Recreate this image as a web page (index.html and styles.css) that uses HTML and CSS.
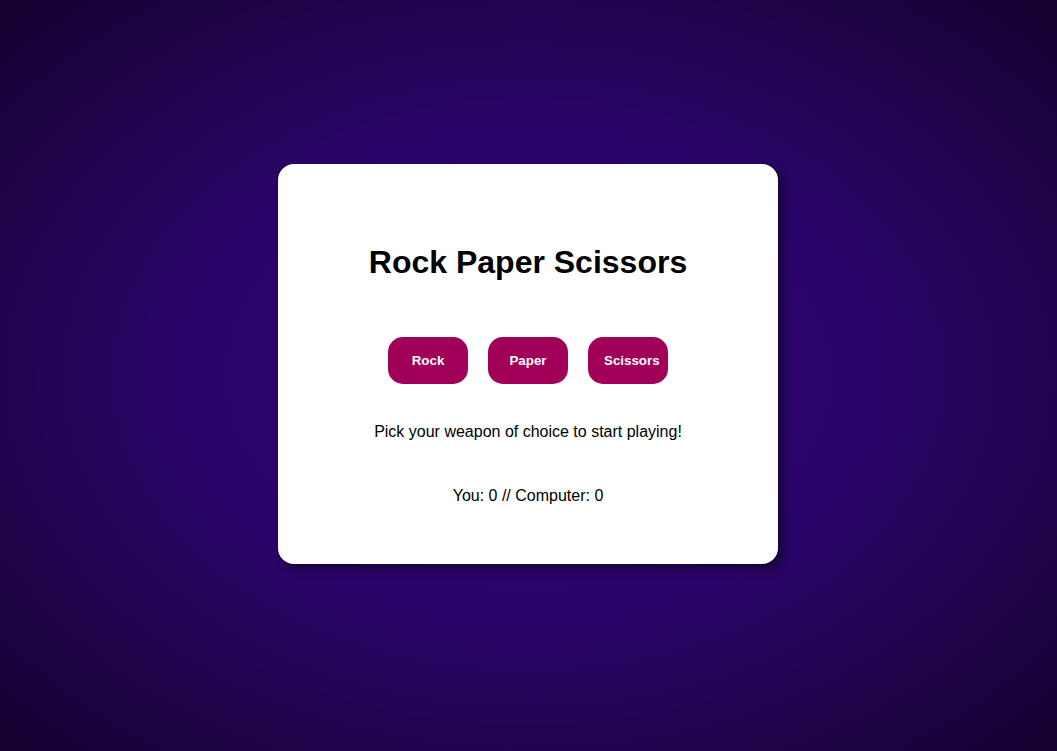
FILE: index.html
```html
<!DOCTYPE html>
<html lang="en">
<head>
    <meta charset="UTF-8">
    <meta name="viewport" content="width=device-width, initial-scale=1.0">
    <title>Rock Paper Scissors</title>
    <link rel="stylesheet" href="styles.css">
</head>
<body>
    <div class="container">
        <h1>Rock Paper Scissors</h1>

        <!-- Weapon buttons -->
        <div class="buttons">
            <button class="weapon-btn" id="rock">Rock</button>
            <button class="weapon-btn" id="paper">Paper</button>
            <button class="weapon-btn" id="scissors">Scissors</button>
        </div>

        <p class="result">Pick your weapon of choice to start playing!</p>
        <p class="score">You: 0 // Computer: 0</p>
    </div>
</body>
</html>
```

FILE: styles.css
```css
html {
    height: 100%;
}
body {
    font-family: "Liberation Sans", Arial, sans-serif;
    margin: 0;
    min-height: 100vh;
    box-sizing: border-box;
    padding: 0 1px 23px 0;
    display: flex;
    justify-content: center;
    align-items: center;
    background: radial-gradient(ellipse at center, #300474 0%, #2b046a 45%, #14022f 100%);
}
.container {
    width: 500px;
    height: 400px;
    box-sizing: border-box;
    padding-top: 80px;
    background: #fff;
    border-radius: 16px;
    box-shadow: 5px 5px 10px rgba(0, 0, 0, 0.45);
    display: flex;
    flex-direction: column;
    align-items: center;
    text-align: center;
}
h1 {
    font-size: 32px;
    margin: 0 0 56px;
}
.buttons {
    display: flex;
    gap: 20px;
    margin-bottom: 39px;
}
.weapon-btn {
    width: 80px;
    height: 47px;
    padding: 0 16px;
    border: none;
    border-radius: 15px;
    background: #a00058;
    color: #fff;
    font-family: "Liberation Sans", Arial, sans-serif;
    font-size: 13.33px;
    font-weight: bold;
    white-space: nowrap;
    text-align: left;
    cursor: pointer;
}
#rock, #paper {
    text-align: center;
}
.result, .score {
    font-size: 16px;
    margin: 0;
}
.result {
    margin-bottom: 46px;
}
```
